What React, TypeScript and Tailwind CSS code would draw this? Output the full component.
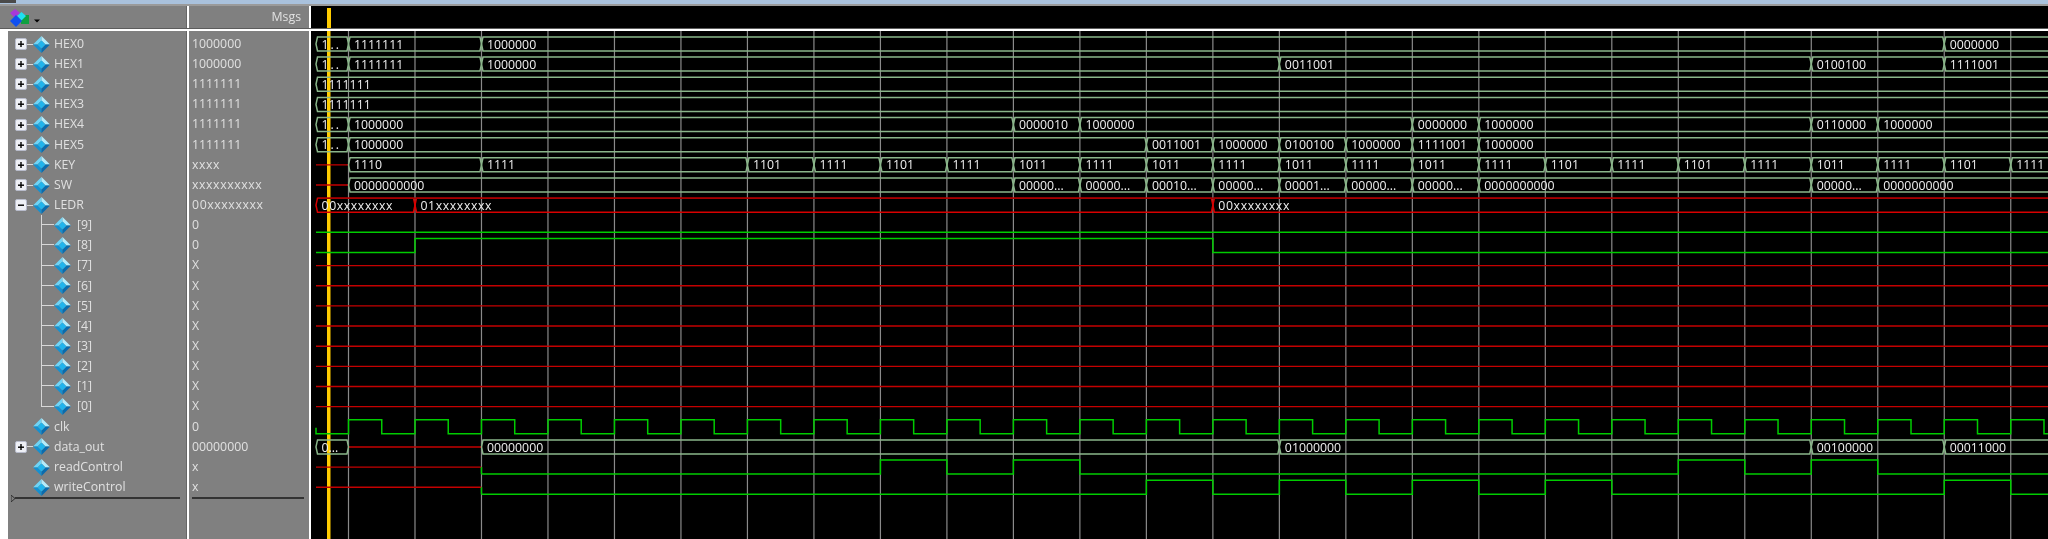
import React from 'react';

const ROW_H = 20.15;
const GRID_X0 = 348.5;
const GRID_STEP = 66.49;
const START_X = 316;
const END_X = 2050;

const tx = (i: number) => GRID_X0 + GRID_STEP * i;
const midY = (r: number) => 43.95 + ROW_H * r;

type Seg = [number, string];

// bus values: [grid index where the value starts, label], -1 means the left edge of the trace
const buses: { row: number; segs: Seg[]; red?: boolean }[] = [
  { row: 0, segs: [[-1, '1..'], [0, '1111111'], [2, '1000000'], [24, '0000000']] },
  { row: 1, segs: [[-1, '1..'], [0, '1111111'], [2, '1000000'], [14, '0011001'], [22, '0100100'], [24, '1111001']] },
  { row: 2, segs: [[-1, '1111111']] },
  { row: 3, segs: [[-1, '1111111']] },
  { row: 4, segs: [[-1, '1..'], [0, '1000000'], [10, '0000010'], [11, '1000000'], [16, '0000000'], [17, '1000000'], [22, '0110000'], [23, '1000000']] },
  { row: 5, segs: [[-1, '1..'], [0, '1000000'], [12, '0011001'], [13, '1000000'], [14, '0100100'], [15, '1000000'], [16, '1111001'], [17, '1000000']] },
  {
    row: 6,
    segs: [
      [0, '1110'], [2, '1111'], [6, '1101'], [7, '1111'], [8, '1101'], [9, '1111'], [10, '1011'], [11, '1111'], [12, '1011'], [13, '1111'],
      [14, '1011'], [15, '1111'], [16, '1011'], [17, '1111'], [18, '1101'], [19, '1111'], [20, '1101'], [21, '1111'], [22, '1011'], [23, '1111'], [24, '1101'], [25, '1111'],
    ],
  },
  {
    row: 7,
    segs: [
      [0, '0000000000'], [10, '00000...'], [11, '00000...'], [12, '00010...'], [13, '00000...'], [14, '00001...'], [15, '00000...'], [16, '00000...'],
      [17, '0000000000'], [22, '00000...'], [23, '0000000000'],
    ],
  },
  { row: 8, red: true, segs: [[-1, '00xxxxxxxx'], [1, '01xxxxxxxx'], [13, '00xxxxxxxx']] },
  { row: 20, segs: [[-1, '0...'], [2, '00000000'], [14, '01000000'], [22, '00100000'], [24, '00011000']] },
];

// bit traces: list of [grid index, level] changes, level 0 low / 1 high
const bits: { row: number; changes: [number, number][] }[] = [
  { row: 9, changes: [] },
  { row: 10, changes: [[1, 1], [13, 0]] },
  { row: 21, changes: [[8, 1], [9, 0], [10, 1], [11, 0], [20, 1], [21, 0], [22, 1], [23, 0]] },
  { row: 22, changes: [[12, 1], [13, 0], [14, 1], [15, 0], [16, 1], [17, 0], [18, 1], [19, 0], [24, 1], [25, 0]] },
];

const busPath = (x1: number, x2: number, y: number) =>
  `M${x1} ${y}L${x1 + 1.5} ${y - 7}L${x2 - 1.5} ${y - 7}L${x2} ${y}L${x2 - 1.5} ${y + 7}L${x1 + 1.5} ${y + 7}Z`;

const bitPath = (row: number, changes: [number, number][], from: number) => {
  const y = midY(row);
  const level = (v: number) => (v ? y - 7 : y + 7);
  let d = `M${from} ${level(0)}`;
  changes.forEach(([i, v]) => {
    const x = tx(i);
    d += `L${x} ${level(v ? 0 : 1)}L${x} ${level(v)}`;
  });
  return d + `L${END_X} ${level(changes.length ? changes[changes.length - 1][1] : 0)}`;
};

const clkPath = () => {
  const y = midY(19);
  let d = `M${START_X} ${y + 1}L${START_X} ${y + 7}L${tx(0)} ${y + 7}`;
  for (let i = 0; i < 26; i++) {
    d += `L${tx(i)} ${y - 7}L${tx(i + 0.5)} ${y - 7}L${tx(i + 0.5)} ${y + 7}L${tx(i + 1)} ${y + 7}`;
  }
  return d;
};

const Waves = () => (
  <svg viewBox="311 31 1737 508" width={1737} height={508} className="block">
    {Array.from({ length: 26 }, (_, i) => (
      <line key={i} x1={tx(i)} x2={tx(i)} y1={31} y2={539} stroke="#8a8a8a" strokeWidth={1.2} />
    ))}
    <rect x={327} y={31} width={3.5} height={508} fill="#ffcc00" />

    {/* x (unknown) bits */}
    {[11, 12, 13, 14, 15, 16, 17, 18].map((r) => (
      <line key={r} x1={316} x2={END_X} y1={midY(r)} y2={midY(r)} stroke="#c40000" strokeWidth={1.4} />
    ))}
    {[6, 7].map((r) => (
      <line key={r} x1={316} x2={tx(0)} y1={midY(r)} y2={midY(r)} stroke="#c40000" strokeWidth={1.4} />
    ))}
    <line x1={tx(0)} x2={tx(2)} y1={midY(20)} y2={midY(20)} stroke="#c40000" strokeWidth={1.4} />
    <line x1={316} x2={tx(2)} y1={midY(21)} y2={midY(21)} stroke="#c40000" strokeWidth={1.4} />
    <line x1={316} x2={tx(2)} y1={midY(22)} y2={midY(22)} stroke="#c40000" strokeWidth={1.4} />

    {bits.map((b) => (
      <path key={b.row} d={bitPath(b.row, b.changes, b.row > 20 ? tx(2) : 316)} fill="none" stroke="#00cc00" strokeWidth={1.5} />
    ))}
    <path d={`M${tx(2)} ${midY(21)}L${tx(2)} ${midY(21) + 7}`} stroke="#00cc00" strokeWidth={1.5} />
    <path d={`M${tx(2)} ${midY(22)}L${tx(2)} ${midY(22) + 7}`} stroke="#00cc00" strokeWidth={1.5} />
    <path d={clkPath()} fill="none" stroke="#00cc00" strokeWidth={1.5} />

    {buses.map((b) =>
      b.segs.map(([i, label], n) => {
        const x1 = i < 0 ? START_X : tx(i);
        const next = b.segs[n + 1];
        let x2 = next ? tx(next[0]) : END_X;
        // data_out goes back to x between its first value and the first real one
        if (b.row === 20 && i < 0) x2 = tx(0);
        const y = midY(b.row);
        return (
          <g key={`${b.row}-${n}`}>
            <path d={busPath(x1, x2, y)} fill="none" stroke={b.red ? '#d80000' : '#8ab68a'} strokeWidth={1.5} />
            <text
              x={x1 + 5.5}
              y={y + 4.6}
              fill="#f0f0f0"
              className={label === '1..' ? 'tracking-[2px]' : label.includes('xx') ? 'tracking-[0.6px]' : 'tracking-normal'}
              style={{ fontSize: 12.3, fontFamily: '"Open Sans", sans-serif' }}
            >
              {label}
            </text>
          </g>
        );
      })
    )}
    {/* upper edge of the LEDR bus is the darker red */}
    <line x1={318} x2={END_X} y1={midY(8) - 7} y2={midY(8) - 7} stroke="#a80000" strokeWidth={1.5} />
  </svg>
);

const Diamond = () => (
  <svg viewBox="0 0 17 17" className="w-[17px] h-[17px] shrink-0">
    <polygon points="8.5,0 0,8.5 4.5,8.5 8.5,4.5" fill="#6fd4f6" />
    <polygon points="8.5,0 17,8.5 12.5,8.5 8.5,4.5" fill="#b4ecfb" />
    <polygon points="0,8.5 8.5,17 8.5,12.5 4.5,8.5" fill="#1590d0" />
    <polygon points="17,8.5 8.5,17 8.5,12.5 12.5,8.5" fill="#0a6cae" />
    <polygon points="8.5,4.5 12.5,8.5 8.5,12.5 4.5,8.5" fill="#20b4ec" />
  </svg>
);

const ToggleBox = ({ open }: { open: boolean }) => (
  <svg viewBox="0 0 12 12" className="w-3 h-3 shrink-0">
    <rect x="0.5" y="0.5" width="11" height="11" rx="1.5" fill="#eef0f6" stroke="#b8bccc" />
    <rect x="3" y="5.5" width="6" height="1.4" fill="#000" />
    {!open && <rect x="5.3" y="3" width="1.4" height="6" fill="#000" />}
  </svg>
);

type Row = { name: string; value: string; kind: 'bus' | 'open' | 'child' | 'plain'; last?: boolean };

const rows: Row[] = [
  { name: 'HEX0', value: '1000000', kind: 'bus' },
  { name: 'HEX1', value: '1000000', kind: 'bus' },
  { name: 'HEX2', value: '1111111', kind: 'bus' },
  { name: 'HEX3', value: '1111111', kind: 'bus' },
  { name: 'HEX4', value: '1111111', kind: 'bus' },
  { name: 'HEX5', value: '1111111', kind: 'bus' },
  { name: 'KEY', value: 'xxxx', kind: 'bus' },
  { name: 'SW', value: 'xxxxxxxxxx', kind: 'bus' },
  { name: 'LEDR', value: '00xxxxxxxx', kind: 'open' },
  { name: '[9]', value: '0', kind: 'child' },
  { name: '[8]', value: '0', kind: 'child' },
  { name: '[7]', value: 'X', kind: 'child' },
  { name: '[6]', value: 'X', kind: 'child' },
  { name: '[5]', value: 'X', kind: 'child' },
  { name: '[4]', value: 'X', kind: 'child' },
  { name: '[3]', value: 'X', kind: 'child' },
  { name: '[2]', value: 'X', kind: 'child' },
  { name: '[1]', value: 'X', kind: 'child' },
  { name: '[0]', value: 'X', kind: 'child', last: true },
  { name: 'clk', value: '0', kind: 'plain' },
  { name: 'data_out', value: '00000000', kind: 'bus' },
  { name: 'readControl', value: 'x', kind: 'plain' },
  { name: 'writeControl', value: 'x', kind: 'plain' },
];

const NameRow = ({ row }: { row: Row }) => {
  if (row.kind === 'child') {
    return (
      <div className="flex h-[20.15px] items-center">
        <div className="ml-[33px] w-[13px] self-stretch shrink-0 flex flex-col">
          <div className="w-[13px] border-l border-b border-[#d8d8d8] h-1/2" />
          {!row.last && <div className="flex-1 border-l border-[#d8d8d8]" />}
        </div>
        <Diamond />
        <span className="ml-[6px]">{row.name}</span>
      </div>
    );
  }
  return (
    <div className="flex h-[20.15px] items-center">
      <div className="w-[7px] shrink-0" />
      {row.kind === 'plain' ? (
        <div className="w-[18px] shrink-0" />
      ) : (
        <>
          <ToggleBox open={row.kind === 'open'} />
          <div className="w-[6px] h-px bg-[#d8d8d8] shrink-0" />
        </>
      )}
      <Diamond />
      <span className="ml-[4px]">{row.name}</span>
    </div>
  );
};

// drawn in page coordinates, the pane header starts at y=6
const TopIcon = () => (
  <svg viewBox="8 6 34 22" className="w-[34px] h-[22px] ml-2">
    <polygon points="15,9 20,13 15,18 10,13" fill="#a838d8" />
    <rect x="21" y="15" width="8" height="9" fill="#10a040" />
    <polygon points="21.5,12 26,16 21.5,20.5 17,16" fill="#20e0f0" />
    <polygon points="16,15 22,21 16,27 10,21" fill="#1050f0" />
    <polygon points="34,19.5 40,19.5 37,22.5" fill="#000" />
  </svg>
);

export default function App() {
  return (
    <div
      className="w-[2048px] h-[539px] overflow-hidden flex flex-col bg-white text-[12.3px] text-[#e0e0e0] blur-[0.4px]"
      style={{ fontFamily: '"Open Sans", sans-serif' }}
    >
      {/* window title strip */}
      <div className="h-1 bg-[#a9c1dc] shrink-0">
        <div className="w-4 h-[3px] bg-[#4a4a4a]" />
      </div>
      <div className="h-[2px] bg-[#9a9a9a] shrink-0" />

      {/* pane headers */}
      <div className="flex h-[22px] shrink-0 bg-[#6a6a6a]">
        <div className="w-[187px] bg-[#808080] flex items-center border-r border-[#666]">
          <TopIcon />
        </div>
        <div className="w-[2px] bg-white" />
        <div className="w-[120px] bg-[#808080] flex items-center justify-end pr-2">Msgs</div>
        <div className="w-[2px] bg-white" />
        <div className="flex-1 bg-black pl-[16px] pt-[2px]">
          <div className="w-[3.5px] h-full bg-[#ffcc00]" />
        </div>
      </div>
      <div className="h-px bg-[#5c5c5c] shrink-0" />
      <div className="h-[2px] bg-white shrink-0" />

      {/* signal names, values and traces */}
      <div className="flex flex-1 min-h-0">
        <div className="w-[8px] bg-white shrink-0" />
        <div className="w-[179px] bg-[#808080] pt-[3px] shrink-0 border-r border-[#666]">
          {rows.map((r) => (
            <NameRow key={r.name} row={r} />
          ))}
          <div className="flex items-center h-[2px] ml-[3px]">
            <svg viewBox="0 0 4 7" className="w-1 h-[7px] shrink-0">
              <polygon points="0,0 4,3.5 0,7" fill="none" stroke="#303030" />
            </svg>
            <div className="h-[2px] flex-1 mr-[6px] bg-[#333]" />
          </div>
        </div>
        <div className="w-[2px] bg-white shrink-0" />
        <div className="w-[120px] bg-[#808080] pt-[3px] shrink-0">
          {rows.map((r) => (
            <div
              key={r.name}
              className={`h-[20.15px] flex items-center pl-[3px] ${r.value.includes('xx') ? 'tracking-[0.6px]' : 'tracking-normal'}`}
            >
              {r.value}
            </div>
          ))}
          <div className="h-[2px] bg-[#333] ml-[3px] mr-[5px]" />
        </div>
        <div className="w-[2px] bg-white shrink-0" />
        <div className="flex-1 bg-black min-w-0">
          <Waves />
        </div>
      </div>
    </div>
  );
}
